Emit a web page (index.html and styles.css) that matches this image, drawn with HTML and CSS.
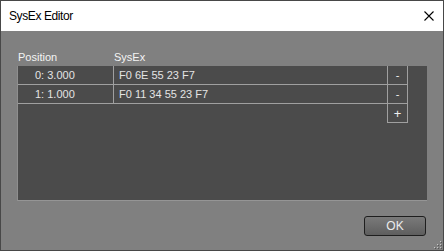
FILE: index.html
```html
<!DOCTYPE html>
<html lang="en">
<head>
    <meta charset="UTF-8">
    <title>SysEx Editor</title>
    <link rel="stylesheet" href="styles.css">
</head>
<body>

    <div class="window">
        <div class="titlebar">
            <span class="title">SysEx Editor</span>
            <svg class="close" width="10" height="10" viewBox="0 0 10 10">
                <path d="M0.5 0.5 L9.5 9.5 M9.5 0.5 L0.5 9.5" stroke="#000" stroke-width="1.1" fill="none"/>
            </svg>
        </div>

        <div class="content">
            <div class="header">
                <span class="h-pos">Position</span>
                <span class="h-data">SysEx</span>
            </div>

            <div class="list">
                <div class="row">
                    <div class="cell pos">0: 3.000</div>
                    <div class="cell data">F0 6E 55 23 F7</div>
                    <div class="cell btn">-</div>
                </div>
                <div class="row">
                    <div class="cell pos">1: 1.000</div>
                    <div class="cell data">F0 11 34 55 23 F7</div>
                    <div class="cell btn">-</div>
                </div>
                <div class="row">
                    <div class="spacer"></div>
                    <div class="cell btn plus">+</div>
                </div>
            </div>

            <div class="footer">
                <button class="ok">OK</button>
            </div>
        </div>

        <!-- size grip -->
        <svg class="grip" width="9" height="9" viewBox="0 0 9 9">
            <rect x="7" y="1" width="1" height="1" fill="#c8c8c8"/>
            <rect x="4" y="4" width="1" height="1" fill="#c8c8c8"/>
            <rect x="7" y="4" width="1" height="1" fill="#c8c8c8"/>
            <rect x="1" y="7" width="1" height="1" fill="#c8c8c8"/>
            <rect x="4" y="7" width="1" height="1" fill="#c8c8c8"/>
            <rect x="7" y="7" width="1" height="1" fill="#c8c8c8"/>
            <rect x="8" y="2" width="1" height="1" fill="#555"/>
            <rect x="5" y="5" width="1" height="1" fill="#555"/>
            <rect x="8" y="5" width="1" height="1" fill="#555"/>
            <rect x="2" y="8" width="1" height="1" fill="#555"/>
            <rect x="5" y="8" width="1" height="1" fill="#555"/>
            <rect x="8" y="8" width="1" height="1" fill="#555"/>
        </svg>
    </div>

</body>
</html>
```

FILE: styles.css
```css
* {
    box-sizing: border-box;
}
body {
    margin: 0;
    font-family: "Liberation Sans", Arial, sans-serif;
    font-size: 11px;
}
.window {
    position: relative;
    width: 444px;
    height: 251px;
    border: 1px solid #484848;
    background: #808080;
    display: flex;
    flex-direction: column;
}
.titlebar {
    height: 30px;
    background: #fff;
    display: flex;
    align-items: center;
    justify-content: space-between;
    padding: 0 9px 0 8px;
}
.title {
    font-size: 12px;
    letter-spacing: -0.4px;
    color: #000;
}
.close {
    display: block;
}
.content {
    flex: 1;
    display: flex;
    flex-direction: column;
    padding: 17px 16px 14px 16px;
}
.header {
    display: flex;
    height: 18px;
    line-height: 18px;
    color: #f4f4f4;
}
.h-pos {
    width: 97px;
    padding-left: 1px;
}
.list {
    width: 410px;
    height: 135px;
    background: #4b4b4b;
    border-left: 1px solid #8f8f8f;
    border-bottom: 1px solid #959595;
    color: #e4e4e4;
}
.row {
    display: flex;
}
.cell {
    height: 19px;
    line-height: 18px;
    border-bottom: 1px solid #a0a0a0;
    white-space: nowrap;
}
.pos {
    width: 96px;
    padding-left: 17px;
    border-right: 1px solid #a0a0a0;
}
.data {
    width: 273px;
    padding-left: 5px;
}
.spacer {
    width: 369px;
}
.btn {
    width: 21px;
    border-left: 1px solid #a0a0a0;
    border-right: 1px solid #a0a0a0;
    text-align: center;
    color: #f0f0f0;
}
.plus {
    font-size: 13px;
    line-height: 19px;
}
.footer {
    display: flex;
    justify-content: flex-end;
    margin-top: 15px;
}
.ok {
    width: 62px;
    height: 20px;
    margin-right: 1px;
    border: 1px solid #1e1e1e;
    border-radius: 3px;
    background: linear-gradient(#7a7a7a, #5e5e5e);
    color: #ececec;
    font-family: "Liberation Sans", Arial, sans-serif;
    font-size: 12px;
    padding: 0;
}
.grip {
    position: absolute;
    right: 1px;
    bottom: 1px;
}
```
